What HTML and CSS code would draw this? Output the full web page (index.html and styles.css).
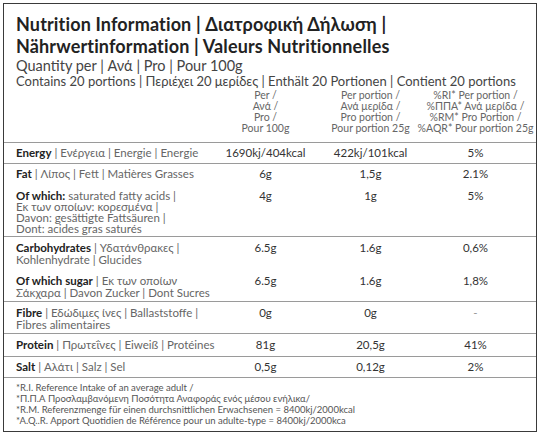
FILE: index.html
```html
<!DOCTYPE html>
<html lang="en">
<head>
<meta charset="utf-8">
<title>Nutrition Information</title>
<link rel="stylesheet" href="styles.css">
</head>
<body>
<div class="label">
  <header class="head">
    <h1 class="title">Nutrition Information | Διατροφική Δήλωση |<br>Nährwertinformation | Valeurs Nutritionnelles</h1>
    <p class="qty">Quantity per | Ανά | Pro | Pour 100g</p>
    <p class="contains">Contains 20 portions | Περιέχει 20 μερίδες | Enthält 20 Portionen | Contient 20 portions</p>
  </header>

  <div class="row colhead">
    <div></div>
    <div class="ch"><span>Per /</span><span>Ανά /</span><span>Pro /</span><span>Pour 100g</span></div>
    <div class="ch"><span>Per portion /</span><span>Ανά μερίδα /</span><span>Pro portion /</span><span>Pour portion 25g</span></div>
    <div class="ch"><span>%RI* Per portion /</span><span>%ΠΠΑ* Ανά μερίδα /</span><span>%RM* Pro Portion /</span><span>%AQR* Pour portion 25g</span></div>
  </div>

  <div class="row r-energy">
    <div class="name"><b>Energy</b> | Ενέργεια | Energie | Energie</div>
    <div class="v">1690kj/404kcal</div>
    <div class="v">422kj/101kcal</div>
    <div class="v">5%</div>
  </div>

  <div class="row r-fat">
    <div class="name"><b>Fat</b> | Λίπος | Fett | Matières Grasses</div>
    <div class="v">6g</div>
    <div class="v">1,5g</div>
    <div class="v">2.1%</div>
    <div class="name sub"><b>Of which:</b> saturated fatty acids |<br>Εκ των οποίων: κορεσμένα |<br>Davon: gesättigte Fattsäuren |<br>Dont: acides gras saturés</div>
    <div class="v">4g</div>
    <div class="v">1g</div>
    <div class="v">5%</div>
  </div>

  <div class="row r-carb">
    <div class="name"><b>Carbohydrates</b> | Υδατάνθρακες |<br>Kohlenhydrate | Glucides</div>
    <div class="v">6.5g</div>
    <div class="v">1.6g</div>
    <div class="v">0,6%</div>
    <div class="name sub2"><b>Of which sugar</b> | Εκ των οποίων<br>Σάκχαρα | Davon Zucker | Dont Sucres</div>
    <div class="v">6.5g</div>
    <div class="v">1.6g</div>
    <div class="v">1,8%</div>
  </div>

  <div class="row r-fibre">
    <div class="name"><b>Fibre</b> | Εδώδιμες ίνες | Ballaststoffe |<br>Fibres alimentaires</div>
    <div class="v">0g</div>
    <div class="v">0g</div>
    <div class="v dash">-</div>
  </div>

  <div class="row r-protein">
    <div class="name"><b>Protein</b> | Πρωτεΐνες | Eiweiß | Protéines</div>
    <div class="v">81g</div>
    <div class="v">20,5g</div>
    <div class="v">41%</div>
  </div>

  <div class="row r-salt">
    <div class="name"><b>Salt</b> | Αλάτι | Salz | Sel</div>
    <div class="v">0,5g</div>
    <div class="v">0,12g</div>
    <div class="v">2%</div>
  </div>

  <footer class="notes">
    <p>*R.I. Reference Intake of an average adult /</p>
    <p>*Π.Π.Α Προσλαμβανόμενη Ποσότητα Αναφοράς ενός μέσου ενήλικα/</p>
    <p>*R.M. Referenzmenge für einen durchsnittlichen Erwachsenen = 8400kj/2000kcal</p>
    <p>*A.Q..R. Apport Quotidien de Référence pour un adulte-type = 8400kj/2000kca</p>
  </footer>
</div>
</body>
</html>
```

FILE: styles.css
```css
* { box-sizing: border-box; }
html, body { margin: 0; padding: 0; background: #fff; }
body {
  font-family: Lato, "Noto Sans", "DejaVu Sans", sans-serif;
  color: #333;
}
.label {
  margin: 3px;
  width: 534px;
  height: 429px;
  border: 1.5px solid #3a3a3a;
  display: flex;
  flex-direction: column;
}
.head { padding: 9px 12px 0 12px; }
.title {
  margin: 0;
  font-size: 18px;
  line-height: 22px;
  font-weight: 700;
  letter-spacing: 0.15px;
  color: #222;
}
.qty {
  margin: 0;
  font-size: 14.5px;
  line-height: 17px;
  color: #444;
}
.contains {
  margin: 0;
  font-size: 13px;
  line-height: 14px;
  color: #444;
}
.row {
  display: grid;
  grid-template-columns: 197px 105px 105px 105px;
  padding: 0 8px 0 12px;
  align-items: start;
}
.row + .row { border-top: 1px solid #9a9a9a; }
.colhead {
  padding-top: 2px;
  padding-bottom: 8px;
}
.ch {
  display: flex;
  flex-direction: column;
  align-items: center;
  font-size: 10.5px;
  line-height: 11px;
  color: #666;
  white-space: nowrap;
}
.name {
  font-size: 11.5px;
  line-height: 12px;
  color: #666;
  white-space: nowrap;
}
.name b { color: #222; font-weight: 700; }
.v {
  display: flex;
  justify-content: center;
  font-size: 11.5px;
  line-height: 12px;
  color: #333;
  white-space: nowrap;
}
.dash { color: #999; }
.r-energy { padding-top: 4px; padding-bottom: 4px; }
.r-fat { padding-top: 4px; padding-bottom: 2px; row-gap: 10px; }
.r-fat .sub { line-height: 11px; }
.r-carb { padding-top: 5px; padding-bottom: 3px; row-gap: 9px; }
.r-carb .sub2 { line-height: 11.5px; }
.r-fibre { padding-top: 5px; padding-bottom: 2px; }
.r-protein { padding-top: 5px; padding-bottom: 5px; }
.r-salt { padding-top: 4px; padding-bottom: 4px; border-bottom: 1px solid #9a9a9a; }
.notes {
  padding: 4px 12px 0;
  font-size: 9.5px;
  line-height: 11px;
  color: #555;
}
.notes p { margin: 0; }
```
